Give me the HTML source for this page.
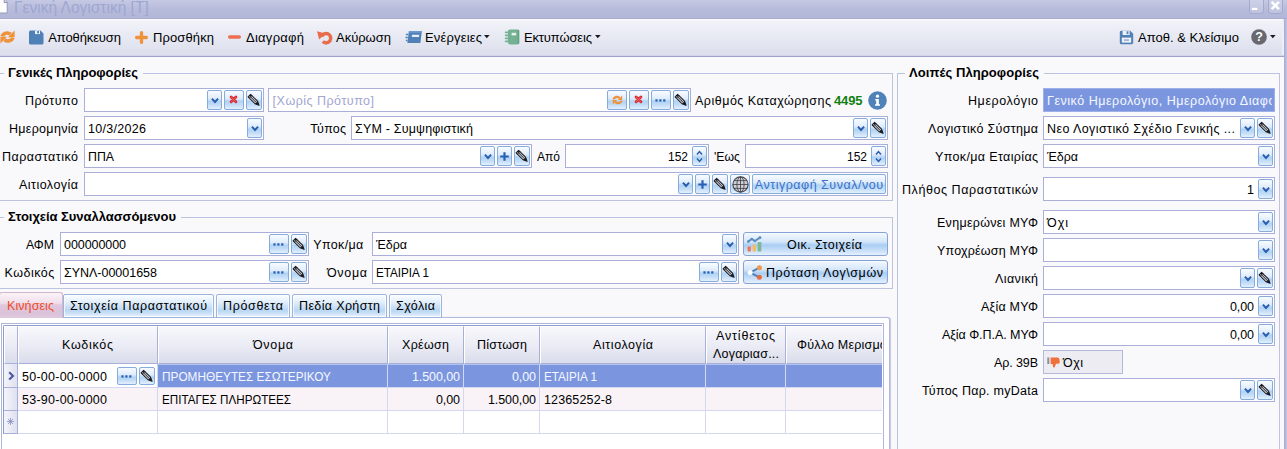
<!DOCTYPE html>
<html lang="el"><head><meta charset="utf-8"><title>Γενική Λογιστική</title>
<style>
html,body{margin:0;padding:0;}
body{width:1287px;height:449px;overflow:hidden;background:#f9f9fc;position:relative;font-family:"Liberation Sans", sans-serif;font-size:12.5px;color:#000;}
div,span.t,span.ic{position:absolute;}
span.ic{line-height:0;display:block;}
span.ic svg{display:block;overflow:visible;}
span.t{white-space:nowrap;line-height:16px;height:16px;}
.inp{border:1px solid #a9afd8;}
.sb{border:1px solid #86abdd;border-radius:2px;background:linear-gradient(#f9fcff,#deecfb 42%,#b0d3f4 58%,#c3def7 78%,#e4f0fc);}
.bb{border:1px solid #86a3d6;border-radius:3px;background:linear-gradient(#f4f9ff,#d4e6fa 40%,#a9cdf2 55%,#cfe3f9 85%,#e6f1fd);}
.tab{box-sizing:border-box;border:1px solid #9db4dc;border-radius:2px 2px 0 0;background:linear-gradient(#fbfdff,#e4f0fc 30%,#cfe3f8 50%,#b9d7f4 72%,#d6e8fa 90%,#f4f9fe);box-shadow:inset 0 0 0 1px rgba(255,255,255,0.7);}
.gh{box-sizing:border-box;border:1px solid #a9b0d8;border-left-color:#fff;border-top-color:#fff;background:linear-gradient(#f8f8fc,#ebecf5 50%,#d9dceb);}
</style></head><body>
<div style="left:0px;top:0px;width:1287px;height:19px;background:linear-gradient(#c6c9e3,#b8bcdb 45%,#b3b7d7 92%,#a4a9cd 100%);"></div>
<span class="ic" style="left:0px;top:0px"><svg width="8" height="14" viewBox="0 0 8 14"><path d="M-3 -2 H4.2 L7.2 2.4 V13 H-3 z" fill="#fdfdfd" stroke="#8e93b8" stroke-width="0.9"/><path d="M4.2 -1 V2.6 H7.2" fill="#d9dae6" stroke="#777b9a" stroke-width="0.8"/></svg></span>
<div style="left:1248.5px;top:-1px;width:15.5px;height:14.5px;background:linear-gradient(#cdd0e7,#bfc3df);border:1px solid #a3a9cf;border-radius:0 0 3px 3px;box-sizing:border-box;"></div>
<span class="ic" style="left:1250px;top:0px"><svg width="14" height="13" viewBox="0 0 14 13"><rect x="1.8" y="7.8" width="5.6" height="2.2" fill="#fff"/></svg></span>
<div style="left:1267.7px;top:-1px;width:15.5px;height:14.5px;background:linear-gradient(#cdd0e7,#bfc3df);border:1px solid #a3a9cf;border-radius:0 0 3px 3px;box-sizing:border-box;"></div>
<span class="ic" style="left:1269px;top:0px"><svg width="14" height="13" viewBox="0 0 14 13"><path d="M2.6 1.8 L10 9.2 M10 1.8 L2.6 9.2" stroke="#fff" stroke-width="2.5"/></svg></span>
<div style="left:0px;top:19px;width:1282px;height:36px;background:linear-gradient(#fbfbfe,#f1f2f8 6%,#e7e9f3 50%,#dcdfec);"></div>
<div style="left:1282px;top:19px;width:2px;height:36px;background:#eef0f8;"></div>
<div style="left:0px;top:55px;width:1284px;height:1px;background:#d2d5e9;"></div>
<div style="left:0px;top:56px;width:1284px;height:1px;background:#9ca3cc;"></div>
<div style="left:1284px;top:19px;width:3px;height:430px;background:linear-gradient(90deg,#a4aad4,#c4c7e3);"></div>
<span class="ic" style="left:0px;top:30px"><svg width="15" height="14" viewBox="0 0 15 14"><path d="M2.2 6.4 A5 4.2 0 0 1 10.6 4.2" fill="none" stroke="#f0923c" stroke-width="3.6"/><path d="M14.6 0.4 V7.2 H7.8 z" fill="#f0923c"/><path d="M12.8 7.6 A5 4.2 0 0 1 4.4 9.8" fill="none" stroke="#f0923c" stroke-width="3.6"/><path d="M0.4 13.6 V6.8 H7.2 z" fill="#f0923c"/></svg></span>
<span class="ic" style="left:29px;top:30px"><svg width="15" height="15" viewBox="0 0 15 15"><path d="M1.5 0.5 H11.5 L14.5 3.5 V13 a1.5 1.5 0 0 1 -1.5 1.5 H1.5 A1.5 1.5 0 0 1 0 13 V2 A1.5 1.5 0 0 1 1.5 0.5 z" fill="#4f80b6"/><rect x="6" y="0.5" width="5" height="3.6" fill="#f0f3fa"/><rect x="8.2" y="1" width="1.8" height="2.4" fill="#4f80b6"/></svg></span>
<span class="ic" style="left:135px;top:31px"><svg width="13" height="13" viewBox="0 0 13 13"><path d="M6.5 1.6 V11.4 M1.6 6.5 H11.4" stroke="#f0923c" stroke-width="3.3" stroke-linecap="round"/></svg></span>
<span class="ic" style="left:228px;top:34.8px"><svg width="13" height="4" viewBox="0 0 13 4"><rect x="0" y="0.2" width="13" height="3.5" rx="1.6" fill="#ee6f50"/></svg></span>
<span class="ic" style="left:317px;top:29.5px"><svg width="15" height="15" viewBox="0 0 15 15"><path d="M4.6 6.6 A4.7 4.7 0 1 1 5.8 11.6" fill="none" stroke="#e86d4a" stroke-width="3.5"/><path d="M0 1.2 L8.4 3.4 L2.2 9.6 z" fill="#e86d4a"/></svg></span>
<span class="ic" style="left:404.6px;top:30px"><svg width="17" height="14" viewBox="0 0 17 14"><path d="M3.9 1 H16.9 L15.4 13 H2.4 z" fill="#4f80b6"/><path d="M4 1 H16.9 L16.7 2.8 H3.8 z" fill="#6c98cb"/><path d="M7 4.8 H14.2 L14 7 H6.8 z" fill="#e4edf8"/><path d="M0.9 4.5 H3.2 M0.5 7.5 H2.8 M0.9 10.5 H2.5" stroke="#4f80b6" stroke-width="1.3"/></svg></span>
<span class="ic" style="left:484px;top:35px"><svg width="6" height="3" viewBox="0 0 6 3"><path d="M0 0 H5.6 L2.8 3.2 z" fill="#1a1a1a"/></svg></span>
<span class="ic" style="left:505px;top:29px"><svg width="15" height="16" viewBox="0 0 15 16"><rect x="3" y="0.6" width="11.2" height="14.8" rx="1.8" fill="#74b193"/><rect x="6.6" y="3.8" width="4.6" height="2.6" fill="#e6f3ec"/><path d="M0.6 3.4 H4.4 M0.6 6.4 H4.4 M0.6 9.4 H4.4 M0.6 12.4 H4.4" stroke="#74b193" stroke-width="1.6" stroke-linecap="round"/><rect x="12.6" y="0.8" width="1.6" height="14.4" rx="0.8" fill="#66a386"/></svg></span>
<span class="ic" style="left:595px;top:35px"><svg width="6" height="3" viewBox="0 0 6 3"><path d="M0 0 H5.6 L2.8 3.2 z" fill="#1a1a1a"/></svg></span>
<span class="ic" style="left:1119px;top:29.5px"><svg width="15" height="15" viewBox="0 0 15 15"><path d="M2 0.8 H11.2 L14.2 3.8 V12.8 a1.4 1.4 0 0 1 -1.4 1.4 H2 A1.4 1.4 0 0 1 0.8 12.8 V2.2 A1.4 1.4 0 0 1 2 0.8 z" fill="#4f80b6"/><rect x="3.6" y="0.8" width="7" height="4.2" fill="#eef1f9"/><rect x="7.6" y="1.3" width="1.8" height="2.8" fill="#4f80b6"/><rect x="2.8" y="7.6" width="9.4" height="5" fill="#eef1f9"/><rect x="5" y="9.2" width="5" height="1.8" fill="#9db7d6"/></svg></span>
<span class="ic" style="left:1250.8px;top:28.7px"><svg width="16" height="16" viewBox="0 0 16 16"><circle cx="8" cy="8" r="7.8" fill="#68686e"/><text x="8" y="12.4" font-family='"Liberation Sans", sans-serif' font-weight="bold" font-size="12.5" fill="#fff" text-anchor="middle">?</text></svg></span>
<span class="ic" style="left:1270px;top:35px"><svg width="6" height="3" viewBox="0 0 6 3"><path d="M0 0 H5.6 L2.8 3.2 z" fill="#1a1a1a"/></svg></span>
<div style="left:-2px;top:73px;width:895px;height:128px;border:1px solid #bdc2e0;box-sizing:border-box;"></div>
<div style="left:4px;top:71px;width:139px;height:5px;background:#f9f9fc;"></div>
<div style="left:-2px;top:217px;width:895px;height:72px;border:1px solid #bdc2e0;box-sizing:border-box;"></div>
<div style="left:4px;top:215px;width:177px;height:5px;background:#f9f9fc;"></div>
<div style="left:897px;top:73px;width:383px;height:400px;border:1px solid #bdc2e0;border-bottom:0;box-sizing:border-box;"></div>
<div style="left:905px;top:71px;width:139px;height:5px;background:#f9f9fc;"></div>
<div class="inp" style="left:84px;top:88px;width:178px;height:22px;background:#fff;"></div>
<div class="sb" style="left:246px;top:90px;width:14px;height:18px;"></div>
<span class="ic" style="left:247.0px;top:93.0px"><svg width="14" height="14" viewBox="0 0 14 14"><g transform="translate(7.3 7.5) rotate(-45)"><path d="M-1.8 -7 h3.6 v9.8 l-1.8 4 l-1.8 -4 z" fill="#c4c4cc" stroke="#1b1b20" stroke-width="1" stroke-linejoin="round"/><path d="M0 -6.2 v9" stroke="#1b1b20" stroke-width="0.8"/><path d="M-1.8 2.8 h3.6 l-1.8 4 z" fill="#1b1b20"/><path d="M-1.8 -5.2 h3.6" stroke="#1b1b20" stroke-width="0.9"/></g></svg></span>
<div class="sb" style="left:224px;top:90px;width:18px;height:18px;"></div>
<span class="ic" style="left:229.2px;top:94.9px"><svg width="9" height="9" viewBox="0 0 9 9"><path d="M2.1 2 L6.9 6.8 M6.9 2 L2.1 6.8" stroke="#dc2c33" stroke-width="2.9" stroke-linecap="round"/><path d="M2.4 2.3 L6.6 6.5 M6.6 2.3 L2.4 6.5" stroke="#f0666a" stroke-width="0.9" stroke-linecap="round"/></svg></span>
<div class="sb" style="left:207px;top:90px;width:13px;height:18px;"></div>
<span class="ic" style="left:210.5px;top:97.5px"><svg width="8" height="6" viewBox="0 0 8 6"><path d="M0.2 1.3 L1.6 0.1 L4 2.5 L6.4 0.1 L7.8 1.3 L4 5.6 z" fill="#2b5cae"/></svg></span>
<div class="inp" style="left:268px;top:88px;width:421px;height:22px;background:#fff;"></div>
<div class="sb" style="left:673px;top:90px;width:14px;height:18px;"></div>
<span class="ic" style="left:674.0px;top:93.0px"><svg width="14" height="14" viewBox="0 0 14 14"><g transform="translate(7.3 7.5) rotate(-45)"><path d="M-1.8 -7 h3.6 v9.8 l-1.8 4 l-1.8 -4 z" fill="#c4c4cc" stroke="#1b1b20" stroke-width="1" stroke-linejoin="round"/><path d="M0 -6.2 v9" stroke="#1b1b20" stroke-width="0.8"/><path d="M-1.8 2.8 h3.6 l-1.8 4 z" fill="#1b1b20"/><path d="M-1.8 -5.2 h3.6" stroke="#1b1b20" stroke-width="0.9"/></g></svg></span>
<div class="sb" style="left:651px;top:90px;width:18px;height:18px;"></div>
<span class="ic" style="left:655.2px;top:98.5px"><svg width="11" height="3" viewBox="0 0 11 3"><rect x="0.4" y="0.3" width="2.2" height="2.3" fill="#2a5fb6"/><rect x="4.3" y="0.3" width="2.2" height="2.3" fill="#2a5fb6"/><rect x="8.2" y="0.3" width="2.2" height="2.3" fill="#2a5fb6"/></svg></span>
<div class="sb" style="left:629px;top:90px;width:18px;height:18px;"></div>
<span class="ic" style="left:634.2px;top:94.9px"><svg width="9" height="9" viewBox="0 0 9 9"><path d="M2.1 2 L6.9 6.8 M6.9 2 L2.1 6.8" stroke="#dc2c33" stroke-width="2.9" stroke-linecap="round"/><path d="M2.4 2.3 L6.6 6.5 M6.6 2.3 L2.4 6.5" stroke="#f0666a" stroke-width="0.9" stroke-linecap="round"/></svg></span>
<div class="sb" style="left:607px;top:90px;width:18px;height:18px;"></div>
<span class="ic" style="left:611.5px;top:95.0px"><svg width="11" height="10" viewBox="0 0 11 10"><path d="M1.6 4.4 A3.4 3 0 0 1 7.6 3" fill="none" stroke="#f0923c" stroke-width="2.4"/><path d="M10.2 0.6 V5 H5.8 z" fill="#f0923c"/><path d="M9.4 5.6 A3.4 3 0 0 1 3.4 7" fill="none" stroke="#f0923c" stroke-width="2.4"/><path d="M0.8 9.4 V5 H5.2 z" fill="#f0923c"/></svg></span>
<span class="ic" style="left:867.9px;top:90.8px"><svg width="19" height="19" viewBox="0 0 20 20"><circle cx="10" cy="10" r="9.8" fill="#4f82b8"/><circle cx="10" cy="5.4" r="1.7" fill="#fff"/><path d="M7.6 8.4 H11.4 V14 H12.6 V15.6 H7.4 V14 H8.6 V10 H7.6 z" fill="#fff"/></svg></span>
<div class="inp" style="left:84px;top:116px;width:178px;height:22px;background:#fff;"></div>
<div class="sb" style="left:247px;top:118px;width:13px;height:18px;"></div>
<span class="ic" style="left:250.5px;top:125.5px"><svg width="8" height="6" viewBox="0 0 8 6"><path d="M0.2 1.3 L1.6 0.1 L4 2.5 L6.4 0.1 L7.8 1.3 L4 5.6 z" fill="#2b5cae"/></svg></span>
<div class="inp" style="left:351px;top:116px;width:535px;height:22px;background:#fff;"></div>
<div class="sb" style="left:870px;top:118px;width:14px;height:18px;"></div>
<span class="ic" style="left:871.0px;top:121.0px"><svg width="14" height="14" viewBox="0 0 14 14"><g transform="translate(7.3 7.5) rotate(-45)"><path d="M-1.8 -7 h3.6 v9.8 l-1.8 4 l-1.8 -4 z" fill="#c4c4cc" stroke="#1b1b20" stroke-width="1" stroke-linejoin="round"/><path d="M0 -6.2 v9" stroke="#1b1b20" stroke-width="0.8"/><path d="M-1.8 2.8 h3.6 l-1.8 4 z" fill="#1b1b20"/><path d="M-1.8 -5.2 h3.6" stroke="#1b1b20" stroke-width="0.9"/></g></svg></span>
<div class="sb" style="left:853px;top:118px;width:13px;height:18px;"></div>
<span class="ic" style="left:856.5px;top:125.5px"><svg width="8" height="6" viewBox="0 0 8 6"><path d="M0.2 1.3 L1.6 0.1 L4 2.5 L6.4 0.1 L7.8 1.3 L4 5.6 z" fill="#2b5cae"/></svg></span>
<div class="inp" style="left:84px;top:144px;width:446px;height:22px;background:#fff;"></div>
<div class="sb" style="left:514px;top:146px;width:14px;height:18px;"></div>
<span class="ic" style="left:515.0px;top:149.0px"><svg width="14" height="14" viewBox="0 0 14 14"><g transform="translate(7.3 7.5) rotate(-45)"><path d="M-1.8 -7 h3.6 v9.8 l-1.8 4 l-1.8 -4 z" fill="#c4c4cc" stroke="#1b1b20" stroke-width="1" stroke-linejoin="round"/><path d="M0 -6.2 v9" stroke="#1b1b20" stroke-width="0.8"/><path d="M-1.8 2.8 h3.6 l-1.8 4 z" fill="#1b1b20"/><path d="M-1.8 -5.2 h3.6" stroke="#1b1b20" stroke-width="0.9"/></g></svg></span>
<div class="sb" style="left:497px;top:146px;width:13px;height:18px;"></div>
<span class="ic" style="left:500.0px;top:151.7px"><svg width="9" height="9" viewBox="0 0 9 9"><path d="M4.5 0.2 V8.8 M0.2 4.5 H8.8" stroke="#2a5fb6" stroke-width="2.2"/></svg></span>
<div class="sb" style="left:480px;top:146px;width:13px;height:18px;"></div>
<span class="ic" style="left:483.5px;top:153.5px"><svg width="8" height="6" viewBox="0 0 8 6"><path d="M0.2 1.3 L1.6 0.1 L4 2.5 L6.4 0.1 L7.8 1.3 L4 5.6 z" fill="#2b5cae"/></svg></span>
<div class="inp" style="left:565px;top:144px;width:142px;height:22px;background:#fff;"></div>
<div class="sb" style="left:692px;top:146px;width:13px;height:18px;"></div>
<span class="ic" style="left:696.0px;top:149.5px"><svg width="7" height="13" viewBox="0 0 7 13"><path d="M1 4.4 L3.5 1.6 L6 4.4" fill="none" stroke="#2f5aa8" stroke-width="1.5"/><path d="M1 8.6 L3.5 11.4 L6 8.6" fill="none" stroke="#2f5aa8" stroke-width="1.5"/></svg></span>
<div class="inp" style="left:745px;top:144px;width:141px;height:22px;background:#fff;"></div>
<div class="sb" style="left:871px;top:146px;width:13px;height:18px;"></div>
<span class="ic" style="left:875.0px;top:149.5px"><svg width="7" height="13" viewBox="0 0 7 13"><path d="M1 4.4 L3.5 1.6 L6 4.4" fill="none" stroke="#2f5aa8" stroke-width="1.5"/><path d="M1 8.6 L3.5 11.4 L6 8.6" fill="none" stroke="#2f5aa8" stroke-width="1.5"/></svg></span>
<div class="inp" style="left:84px;top:172px;width:802px;height:22px;background:#fff;"></div>
<div class="sb" style="left:752px;top:174px;width:132px;height:18px;"></div>
<div class="sb" style="left:730px;top:174px;width:18px;height:18px;"></div>
<span class="ic" style="left:731.5px;top:175.5px"><svg width="17" height="17" viewBox="0 0 17 17"><circle cx="8.5" cy="8.5" r="7.6" fill="#cfcfd4" stroke="#4a4a50" stroke-width="1.1"/><ellipse cx="8.5" cy="8.5" rx="3.6" ry="7.6" fill="none" stroke="#3c3c42" stroke-width="0.8"/><path d="M8.5 0.9 V16.1 M0.9 8.5 H16.1 M2 4.6 H15 M2 12.4 H15" stroke="#3c3c42" stroke-width="0.8"/></svg></span>
<div class="sb" style="left:712px;top:174px;width:14px;height:18px;"></div>
<span class="ic" style="left:713.0px;top:177.0px"><svg width="14" height="14" viewBox="0 0 14 14"><g transform="translate(7.3 7.5) rotate(-45)"><path d="M-1.8 -7 h3.6 v9.8 l-1.8 4 l-1.8 -4 z" fill="#c4c4cc" stroke="#1b1b20" stroke-width="1" stroke-linejoin="round"/><path d="M0 -6.2 v9" stroke="#1b1b20" stroke-width="0.8"/><path d="M-1.8 2.8 h3.6 l-1.8 4 z" fill="#1b1b20"/><path d="M-1.8 -5.2 h3.6" stroke="#1b1b20" stroke-width="0.9"/></g></svg></span>
<div class="sb" style="left:695px;top:174px;width:13px;height:18px;"></div>
<span class="ic" style="left:698.0px;top:179.7px"><svg width="9" height="9" viewBox="0 0 9 9"><path d="M4.5 0.2 V8.8 M0.2 4.5 H8.8" stroke="#2a5fb6" stroke-width="2.2"/></svg></span>
<div class="sb" style="left:678px;top:174px;width:13px;height:18px;"></div>
<span class="ic" style="left:681.5px;top:181.5px"><svg width="8" height="6" viewBox="0 0 8 6"><path d="M0.2 1.3 L1.6 0.1 L4 2.5 L6.4 0.1 L7.8 1.3 L4 5.6 z" fill="#2b5cae"/></svg></span>
<div class="inp" style="left:60px;top:232px;width:247px;height:22px;background:#fff;"></div>
<div class="sb" style="left:291px;top:234px;width:14px;height:18px;"></div>
<span class="ic" style="left:292.0px;top:237.0px"><svg width="14" height="14" viewBox="0 0 14 14"><g transform="translate(7.3 7.5) rotate(-45)"><path d="M-1.8 -7 h3.6 v9.8 l-1.8 4 l-1.8 -4 z" fill="#c4c4cc" stroke="#1b1b20" stroke-width="1" stroke-linejoin="round"/><path d="M0 -6.2 v9" stroke="#1b1b20" stroke-width="0.8"/><path d="M-1.8 2.8 h3.6 l-1.8 4 z" fill="#1b1b20"/><path d="M-1.8 -5.2 h3.6" stroke="#1b1b20" stroke-width="0.9"/></g></svg></span>
<div class="sb" style="left:269px;top:234px;width:18px;height:18px;"></div>
<span class="ic" style="left:273.2px;top:242.5px"><svg width="11" height="3" viewBox="0 0 11 3"><rect x="0.4" y="0.3" width="2.2" height="2.3" fill="#2a5fb6"/><rect x="4.3" y="0.3" width="2.2" height="2.3" fill="#2a5fb6"/><rect x="8.2" y="0.3" width="2.2" height="2.3" fill="#2a5fb6"/></svg></span>
<div class="inp" style="left:60px;top:260px;width:247px;height:22px;background:#fff;"></div>
<div class="sb" style="left:291px;top:262px;width:14px;height:18px;"></div>
<span class="ic" style="left:292.0px;top:265.0px"><svg width="14" height="14" viewBox="0 0 14 14"><g transform="translate(7.3 7.5) rotate(-45)"><path d="M-1.8 -7 h3.6 v9.8 l-1.8 4 l-1.8 -4 z" fill="#c4c4cc" stroke="#1b1b20" stroke-width="1" stroke-linejoin="round"/><path d="M0 -6.2 v9" stroke="#1b1b20" stroke-width="0.8"/><path d="M-1.8 2.8 h3.6 l-1.8 4 z" fill="#1b1b20"/><path d="M-1.8 -5.2 h3.6" stroke="#1b1b20" stroke-width="0.9"/></g></svg></span>
<div class="sb" style="left:269px;top:262px;width:18px;height:18px;"></div>
<span class="ic" style="left:273.2px;top:270.5px"><svg width="11" height="3" viewBox="0 0 11 3"><rect x="0.4" y="0.3" width="2.2" height="2.3" fill="#2a5fb6"/><rect x="4.3" y="0.3" width="2.2" height="2.3" fill="#2a5fb6"/><rect x="8.2" y="0.3" width="2.2" height="2.3" fill="#2a5fb6"/></svg></span>
<div class="inp" style="left:372px;top:232px;width:365px;height:22px;background:#fff;"></div>
<div class="sb" style="left:722px;top:234px;width:13px;height:18px;"></div>
<span class="ic" style="left:725.5px;top:241.5px"><svg width="8" height="6" viewBox="0 0 8 6"><path d="M0.2 1.3 L1.6 0.1 L4 2.5 L6.4 0.1 L7.8 1.3 L4 5.6 z" fill="#2b5cae"/></svg></span>
<div class="inp" style="left:372px;top:260px;width:365px;height:22px;background:#fff;"></div>
<div class="sb" style="left:721px;top:262px;width:14px;height:18px;"></div>
<span class="ic" style="left:722.0px;top:265.0px"><svg width="14" height="14" viewBox="0 0 14 14"><g transform="translate(7.3 7.5) rotate(-45)"><path d="M-1.8 -7 h3.6 v9.8 l-1.8 4 l-1.8 -4 z" fill="#c4c4cc" stroke="#1b1b20" stroke-width="1" stroke-linejoin="round"/><path d="M0 -6.2 v9" stroke="#1b1b20" stroke-width="0.8"/><path d="M-1.8 2.8 h3.6 l-1.8 4 z" fill="#1b1b20"/><path d="M-1.8 -5.2 h3.6" stroke="#1b1b20" stroke-width="0.9"/></g></svg></span>
<div class="sb" style="left:699px;top:262px;width:18px;height:18px;"></div>
<span class="ic" style="left:703.2px;top:270.5px"><svg width="11" height="3" viewBox="0 0 11 3"><rect x="0.4" y="0.3" width="2.2" height="2.3" fill="#2a5fb6"/><rect x="4.3" y="0.3" width="2.2" height="2.3" fill="#2a5fb6"/><rect x="8.2" y="0.3" width="2.2" height="2.3" fill="#2a5fb6"/></svg></span>
<div class="bb" style="left:743px;top:232px;width:143px;height:22px;"></div>
<span class="ic" style="left:747.4px;top:236px"><svg width="16" height="17" viewBox="0 0 16 17"><rect x="0.6" y="10.5" width="3.3" height="5" rx="0.8" fill="#e8775c"/><rect x="5.6" y="8.5" width="3.4" height="7" rx="0.8" fill="#f2bc66"/><rect x="10.6" y="6" width="3.8" height="9.5" rx="0.8" fill="#7db89a"/><path d="M1.2 5.6 L4.8 3 L7.8 5 L13 1.6" fill="none" stroke="#5b8cc0" stroke-width="1.9" stroke-linejoin="round"/><circle cx="1.3" cy="5.6" r="1.3" fill="#5b8cc0"/><circle cx="4.8" cy="3" r="1.3" fill="#5b8cc0"/><circle cx="7.8" cy="5" r="1.3" fill="#5b8cc0"/><circle cx="13" cy="1.7" r="1.4" fill="#5b8cc0"/></svg></span>
<div class="bb" style="left:743px;top:260px;width:143px;height:22px;"></div>
<span class="ic" style="left:747.2px;top:264.6px"><svg width="16" height="15" viewBox="0 0 16 15"><path d="M3.2 7.6 L12.4 2.7 M3.2 7.6 L12.4 12.3" stroke="#4f80b6" stroke-width="2"/><circle cx="3.2" cy="7.6" r="2.5" fill="#fff"/><circle cx="12.4" cy="2.7" r="2.5" fill="#f09848"/><circle cx="12.4" cy="12.3" r="2.5" fill="#e86840"/></svg></span>
<div style="left:-2px;top:317px;width:892px;height:140px;background:#fff;border:1px solid #b4badc;border-radius:0 3px 0 0;box-sizing:border-box;box-shadow:1px 0 1px rgba(120,130,180,0.4);"></div>
<div style="left:-1px;top:292px;width:64px;height:26px;background:linear-gradient(#fbf3f7,#f0dfeb 40%,#e2c8dd 48%,#dac2d9 80%,#e0cadf);border:1px solid #d2b6cf;border-bottom:0;border-radius:3px 3px 0 0;box-sizing:border-box;"></div>
<div class="tab" style="left:63px;top:294px;width:151px;height:24px;"></div>
<div class="tab" style="left:216px;top:294px;width:74px;height:24px;"></div>
<div class="tab" style="left:292px;top:294px;width:95px;height:24px;"></div>
<div class="tab" style="left:389px;top:294px;width:53px;height:24px;"></div>
<div style="left:1px;top:323px;width:883px;height:130px;border:1px solid #b0b6da;box-sizing:border-box;background:#fff;"></div>
<div style="left:3px;top:325px;width:879px;height:109px;border-top:1px solid #8f9ccf;border-left:1px solid #8f9ccf;border-radius:2px 0 0 0;box-sizing:border-box;"></div>
<div class="gh" style="left:4px;top:326px;width:14px;height:38px;"></div>
<div class="gh" style="left:18px;top:326px;width:140px;height:38px;"></div>
<div class="gh" style="left:158px;top:326px;width:230px;height:38px;"></div>
<div class="gh" style="left:388px;top:326px;width:76px;height:38px;"></div>
<div class="gh" style="left:464px;top:326px;width:76px;height:38px;"></div>
<div class="gh" style="left:540px;top:326px;width:166px;height:38px;"></div>
<div class="gh" style="left:706px;top:326px;width:80px;height:38px;"></div>
<div class="gh" style="left:786px;top:326px;width:96px;height:38px;border-right:0;"></div>
<div style="left:18px;top:364px;width:864px;height:1px;background:#fff;"></div>
<div style="left:157px;top:364px;width:725px;height:1px;background:#b4c3ee;"></div>
<div style="left:18px;top:365px;width:864px;height:22px;background:#7b96df;"></div>
<div style="left:18px;top:365px;width:139px;height:22px;background:#fff;"></div>
<div style="left:18px;top:388px;width:864px;height:22px;background:#f9f3f7;"></div>
<div style="left:157px;top:365px;width:1px;height:68px;background:#d3d7f0;"></div>
<div style="left:387px;top:365px;width:1px;height:68px;background:#d3d7f0;"></div>
<div style="left:463px;top:365px;width:1px;height:68px;background:#d3d7f0;"></div>
<div style="left:539px;top:365px;width:1px;height:68px;background:#d3d7f0;"></div>
<div style="left:705px;top:365px;width:1px;height:68px;background:#d3d7f0;"></div>
<div style="left:785px;top:365px;width:1px;height:68px;background:#d3d7f0;"></div>
<div style="left:18px;top:387px;width:864px;height:1px;background:#d3d7f0;"></div>
<div style="left:18px;top:410px;width:864px;height:1px;background:#d3d7f0;"></div>
<div style="left:18px;top:433px;width:864px;height:1px;background:#d3d7f0;"></div>
<div style="left:4px;top:364px;width:13px;height:70px;background:linear-gradient(90deg,#f4f4fa,#dfe1ef);"></div>
<div style="left:4px;top:387px;width:14px;height:1px;background:#a9b0d8;"></div>
<div style="left:4px;top:410px;width:14px;height:1px;background:#a9b0d8;"></div>
<div style="left:4px;top:433px;width:14px;height:1px;background:#a9b0d8;"></div>
<div style="left:17px;top:364px;width:1px;height:70px;background:#a9b0d8;"></div>
<span class="ic" style="left:8px;top:371.3px"><svg width="7" height="10" viewBox="0 0 7 10"><path d="M1.2 1.2 L5 4.9 L1.2 8.6" fill="none" stroke="#4a58a6" stroke-width="2.1"/></svg></span>
<span class="ic" style="left:6.8px;top:418px"><svg width="7" height="7" viewBox="0 0 7 7"><path d="M3.5 0 V7 M0 3.5 H7 M1 1 L6 6 M6 1 L1 6" stroke="#8590c6" stroke-width="0.8"/></svg></span>
<div class="sb" style="left:117px;top:367px;width:18px;height:16px;"></div>
<span class="ic" style="left:121.2px;top:374.5px"><svg width="11" height="3" viewBox="0 0 11 3"><rect x="0.4" y="0.3" width="2.2" height="2.3" fill="#2a5fb6"/><rect x="4.3" y="0.3" width="2.2" height="2.3" fill="#2a5fb6"/><rect x="8.2" y="0.3" width="2.2" height="2.3" fill="#2a5fb6"/></svg></span>
<div class="sb" style="left:139px;top:367px;width:14px;height:16px;"></div>
<span class="ic" style="left:140.0px;top:369.0px"><svg width="14" height="14" viewBox="0 0 14 14"><g transform="translate(7.3 7.5) rotate(-45)"><path d="M-1.8 -7 h3.6 v9.8 l-1.8 4 l-1.8 -4 z" fill="#c4c4cc" stroke="#1b1b20" stroke-width="1" stroke-linejoin="round"/><path d="M0 -6.2 v9" stroke="#1b1b20" stroke-width="0.8"/><path d="M-1.8 2.8 h3.6 l-1.8 4 z" fill="#1b1b20"/><path d="M-1.8 -5.2 h3.6" stroke="#1b1b20" stroke-width="0.9"/></g></svg></span>
<div style="left:1043px;top:88px;width:232px;height:24px;background:#7b96df;border:1px solid #9db0e8;box-sizing:border-box;"></div>
<div class="inp" style="left:1043px;top:116px;width:230px;height:22px;background:#fff;"></div>
<div class="sb" style="left:1257px;top:118px;width:14px;height:18px;"></div>
<span class="ic" style="left:1258.0px;top:121.0px"><svg width="14" height="14" viewBox="0 0 14 14"><g transform="translate(7.3 7.5) rotate(-45)"><path d="M-1.8 -7 h3.6 v9.8 l-1.8 4 l-1.8 -4 z" fill="#c4c4cc" stroke="#1b1b20" stroke-width="1" stroke-linejoin="round"/><path d="M0 -6.2 v9" stroke="#1b1b20" stroke-width="0.8"/><path d="M-1.8 2.8 h3.6 l-1.8 4 z" fill="#1b1b20"/><path d="M-1.8 -5.2 h3.6" stroke="#1b1b20" stroke-width="0.9"/></g></svg></span>
<div class="sb" style="left:1240px;top:118px;width:13px;height:18px;"></div>
<span class="ic" style="left:1243.5px;top:125.5px"><svg width="8" height="6" viewBox="0 0 8 6"><path d="M0.2 1.3 L1.6 0.1 L4 2.5 L6.4 0.1 L7.8 1.3 L4 5.6 z" fill="#2b5cae"/></svg></span>
<div class="inp" style="left:1043px;top:144px;width:230px;height:22px;background:#fff;"></div>
<div class="sb" style="left:1258px;top:146px;width:13px;height:18px;"></div>
<span class="ic" style="left:1261.5px;top:153.5px"><svg width="8" height="6" viewBox="0 0 8 6"><path d="M0.2 1.3 L1.6 0.1 L4 2.5 L6.4 0.1 L7.8 1.3 L4 5.6 z" fill="#2b5cae"/></svg></span>
<div class="inp" style="left:1043px;top:177px;width:230px;height:22px;background:#fff;"></div>
<div class="sb" style="left:1258px;top:179px;width:13px;height:18px;"></div>
<span class="ic" style="left:1261.5px;top:186.5px"><svg width="8" height="6" viewBox="0 0 8 6"><path d="M0.2 1.3 L1.6 0.1 L4 2.5 L6.4 0.1 L7.8 1.3 L4 5.6 z" fill="#2b5cae"/></svg></span>
<div class="inp" style="left:1043px;top:210px;width:230px;height:22px;background:#fff;"></div>
<div class="sb" style="left:1258px;top:212px;width:13px;height:18px;"></div>
<span class="ic" style="left:1261.5px;top:219.5px"><svg width="8" height="6" viewBox="0 0 8 6"><path d="M0.2 1.3 L1.6 0.1 L4 2.5 L6.4 0.1 L7.8 1.3 L4 5.6 z" fill="#2b5cae"/></svg></span>
<div class="inp" style="left:1043px;top:238px;width:230px;height:22px;background:#fff;"></div>
<div class="sb" style="left:1258px;top:240px;width:13px;height:18px;"></div>
<span class="ic" style="left:1261.5px;top:247.5px"><svg width="8" height="6" viewBox="0 0 8 6"><path d="M0.2 1.3 L1.6 0.1 L4 2.5 L6.4 0.1 L7.8 1.3 L4 5.6 z" fill="#2b5cae"/></svg></span>
<div class="inp" style="left:1043px;top:266px;width:230px;height:22px;background:#fff;"></div>
<div class="sb" style="left:1257px;top:268px;width:14px;height:18px;"></div>
<span class="ic" style="left:1258.0px;top:271.0px"><svg width="14" height="14" viewBox="0 0 14 14"><g transform="translate(7.3 7.5) rotate(-45)"><path d="M-1.8 -7 h3.6 v9.8 l-1.8 4 l-1.8 -4 z" fill="#c4c4cc" stroke="#1b1b20" stroke-width="1" stroke-linejoin="round"/><path d="M0 -6.2 v9" stroke="#1b1b20" stroke-width="0.8"/><path d="M-1.8 2.8 h3.6 l-1.8 4 z" fill="#1b1b20"/><path d="M-1.8 -5.2 h3.6" stroke="#1b1b20" stroke-width="0.9"/></g></svg></span>
<div class="sb" style="left:1240px;top:268px;width:13px;height:18px;"></div>
<span class="ic" style="left:1243.5px;top:275.5px"><svg width="8" height="6" viewBox="0 0 8 6"><path d="M0.2 1.3 L1.6 0.1 L4 2.5 L6.4 0.1 L7.8 1.3 L4 5.6 z" fill="#2b5cae"/></svg></span>
<div class="inp" style="left:1043px;top:294px;width:230px;height:22px;background:#fff;"></div>
<div class="sb" style="left:1258px;top:296px;width:13px;height:18px;"></div>
<span class="ic" style="left:1261.5px;top:303.5px"><svg width="8" height="6" viewBox="0 0 8 6"><path d="M0.2 1.3 L1.6 0.1 L4 2.5 L6.4 0.1 L7.8 1.3 L4 5.6 z" fill="#2b5cae"/></svg></span>
<div class="inp" style="left:1043px;top:322px;width:230px;height:22px;background:#fff;"></div>
<div class="sb" style="left:1258px;top:324px;width:13px;height:18px;"></div>
<span class="ic" style="left:1261.5px;top:331.5px"><svg width="8" height="6" viewBox="0 0 8 6"><path d="M0.2 1.3 L1.6 0.1 L4 2.5 L6.4 0.1 L7.8 1.3 L4 5.6 z" fill="#2b5cae"/></svg></span>
<div style="left:1043px;top:350px;width:80px;height:24px;background:#ececf2;border:1px solid #b3b9dc;box-sizing:border-box;"></div>
<span class="ic" style="left:1047px;top:356.5px"><svg width="13" height="11" viewBox="0 0 13 11"><rect x="0.3" y="0.5" width="2" height="6.5" fill="#8a8f98"/><path d="M3.6 0.5 H10.6 q1.6 0 1.8 1.6 L12.8 5 q0 1.8 -1.6 1.8 H9 L7.6 10.6 q-1.8 0 -1.8 -1.6 V7 H3.6 z" fill="#f0703c"/></svg></span>
<div class="inp" style="left:1043px;top:378px;width:230px;height:22px;background:#fff;"></div>
<div class="sb" style="left:1257px;top:380px;width:14px;height:18px;"></div>
<span class="ic" style="left:1258.0px;top:383.0px"><svg width="14" height="14" viewBox="0 0 14 14"><g transform="translate(7.3 7.5) rotate(-45)"><path d="M-1.8 -7 h3.6 v9.8 l-1.8 4 l-1.8 -4 z" fill="#c4c4cc" stroke="#1b1b20" stroke-width="1" stroke-linejoin="round"/><path d="M0 -6.2 v9" stroke="#1b1b20" stroke-width="0.8"/><path d="M-1.8 2.8 h3.6 l-1.8 4 z" fill="#1b1b20"/><path d="M-1.8 -5.2 h3.6" stroke="#1b1b20" stroke-width="0.9"/></g></svg></span>
<div class="sb" style="left:1240px;top:380px;width:13px;height:18px;"></div>
<span class="ic" style="left:1243.5px;top:387.5px"><svg width="8" height="6" viewBox="0 0 8 6"><path d="M0.2 1.3 L1.6 0.1 L4 2.5 L6.4 0.1 L7.8 1.3 L4 5.6 z" fill="#2b5cae"/></svg></span>
<span class="t" id="t0" style="left:14.3px;top:-0.02px;font-size:17px;color:#9da7d2;transform:scaleX(0.913);transform-origin:0 0;">Γενική Λογιστική [T]</span>
<span class="t" id="t1" style="left:48.3px;top:29.90px;font-size:13px;letter-spacing:-0.124px;">Αποθήκευση</span>
<span class="t" id="t2" style="left:153px;top:29.90px;font-size:13px;letter-spacing:0.109px;">Προσθήκη</span>
<span class="t" id="t3" style="left:246px;top:29.90px;font-size:13px;letter-spacing:0.261px;">Διαγραφή</span>
<span class="t" id="t4" style="left:336px;top:29.90px;font-size:13px;letter-spacing:-0.016px;">Ακύρωση</span>
<span class="t" id="t5" style="left:425px;top:29.90px;font-size:13px;letter-spacing:0.174px;">Ενέργειες</span>
<span class="t" id="t6" style="left:524px;top:29.90px;font-size:13px;letter-spacing:-0.148px;">Εκτυπώσεις</span>
<span class="t" id="t7" style="left:1138px;top:29.90px;font-size:13px;letter-spacing:0.005px;">Αποθ. &amp; Κλείσιμο</span>
<span class="t" id="t8" style="left:8px;top:65.10px;font-size:13px;font-weight:bold;letter-spacing:-0.038px;">Γενικές Πληροφορίες</span>
<span class="t" id="t9" style="left:8px;top:209.10px;font-size:13px;font-weight:bold;letter-spacing:-0.040px;">Στοιχεία Συναλλασσόμενου</span>
<span class="t" id="t10" style="left:909px;top:65.10px;font-size:13px;font-weight:bold;letter-spacing:0.072px;">Λοιπές Πληροφορίες</span>
<span class="t" id="t11" style="left:25px;top:92.87px;letter-spacing:0.484px;">Πρότυπο</span>
<span class="t" id="t12" style="left:272.6px;top:92.87px;color:#a2a6cf;letter-spacing:0.492px;">[Χωρίς Πρότυπο]</span>
<span class="t" id="t13" style="left:695px;top:92.87px;letter-spacing:0.502px;">Αριθμός Καταχώρησης</span>
<span class="t" id="t14" style="left:834px;top:92.70px;font-size:13px;color:#128012;font-weight:bold;letter-spacing:-0.141px;">4495</span>
<span class="t" id="t15" style="left:9px;top:120.87px;letter-spacing:0.302px;">Ημερομηνία</span>
<span class="t" id="t16" style="left:88px;top:120.87px;letter-spacing:0.299px;">10/3/2026</span>
<span class="t" id="t17" style="left:310.3px;top:120.87px;letter-spacing:0.222px;">Τύπος</span>
<span class="t" id="t18" style="left:355px;top:120.87px;letter-spacing:0.192px;">ΣΥΜ - Συμψηφιστική</span>
<span class="t" id="t19" style="left:2px;top:148.87px;letter-spacing:0.494px;">Παραστατικό</span>
<span class="t" id="t20" style="left:88px;top:148.87px;transform:scaleX(0.9846);transform-origin:0 0;">ΠΠΑ</span>
<span class="t" id="t21" style="left:537px;top:148.87px;transform:scaleX(0.9615);transform-origin:0 0;">Από</span>
<span class="t" id="t22" style="left:668px;top:148.87px;transform:scaleX(0.9588);transform-origin:0 0;">152</span>
<span class="t" id="t23" style="left:714px;top:148.87px;transform:scaleX(0.9806);transform-origin:0 0;">'Εως</span>
<span class="t" id="t24" style="left:847px;top:148.87px;transform:scaleX(0.9588);transform-origin:0 0;">152</span>
<span class="t" id="t25" style="left:19px;top:176.87px;letter-spacing:0.465px;">Αιτιολογία</span>
<span class="t" id="t26" style="left:754.8px;top:176.87px;color:#3a72cc;letter-spacing:0.511px;">Αντιγραφή Συναλ/νου</span>
<span class="t" id="t27" style="left:26px;top:236.87px;transform:scaleX(0.9868);transform-origin:0 0;">ΑΦΜ</span>
<span class="t" id="t28" style="left:64px;top:236.87px;letter-spacing:-0.072px;">000000000</span>
<span class="t" id="t29" style="left:4.5px;top:264.87px;letter-spacing:0.506px;">Κωδικός</span>
<span class="t" id="t30" style="left:64px;top:264.87px;letter-spacing:-0.020px;">ΣΥΝΛ-00001658</span>
<span class="t" id="t31" style="left:313.3px;top:236.87px;letter-spacing:0.352px;">Υποκ/μα</span>
<span class="t" id="t32" style="left:376px;top:236.87px;letter-spacing:-0.036px;">Έδρα</span>
<span class="t" id="t33" style="left:327px;top:264.87px;letter-spacing:0.672px;">Όνομα</span>
<span class="t" id="t34" style="left:376px;top:264.87px;transform:scaleX(0.9339);transform-origin:0 0;">ΕΤΑΙΡΙΑ 1</span>
<span class="t" id="t35" style="left:787px;top:236.87px;letter-spacing:0.462px;">Οικ. Στοιχεία</span>
<span class="t" id="t36" style="left:766px;top:264.87px;letter-spacing:0.579px;">Πρόταση Λογ\σμών</span>
<span class="t" id="t37" style="left:7px;top:298.27px;color:#f04c28;letter-spacing:0.085px;">Κινήσεις</span>
<span class="t" id="t38" style="left:70px;top:298.47px;letter-spacing:0.594px;">Στοιχεία Παραστατικού</span>
<span class="t" id="t39" style="left:223px;top:298.47px;letter-spacing:0.667px;">Πρόσθετα</span>
<span class="t" id="t40" style="left:299px;top:298.47px;letter-spacing:0.359px;">Πεδία Χρήστη</span>
<span class="t" id="t41" style="left:396px;top:298.47px;letter-spacing:0.416px;">Σχόλια</span>
<span class="t" id="t42" style="left:62px;top:337.37px;letter-spacing:0.706px;">Κωδικός</span>
<span class="t" id="t43" style="left:253px;top:337.37px;letter-spacing:0.672px;">Όνομα</span>
<span class="t" id="t44" style="left:402px;top:337.37px;letter-spacing:0.309px;">Χρέωση</span>
<span class="t" id="t45" style="left:477px;top:337.37px;letter-spacing:0.214px;">Πίστωση</span>
<span class="t" id="t46" style="left:593px;top:337.37px;letter-spacing:0.576px;">Αιτιολογία</span>
<span class="t" id="t47" style="left:716px;top:328.37px;letter-spacing:0.832px;">Αντίθετος</span>
<span class="t" id="t48" style="left:713px;top:345.87px;letter-spacing:0.197px;">Λογαριασ...</span>
<span class="t" id="t49" style="left:797px;top:337.37px;letter-spacing:0.21px;width:85px;overflow:hidden;">Φύλλο Μερισμο</span>
<span class="t" id="t50" style="left:22px;top:369.17px;letter-spacing:0.249px;">50-00-00-0000</span>
<span class="t" id="t51" style="left:162px;top:369.17px;color:#f6f8ff;transform:scaleX(0.9446);transform-origin:0 0;">ΠΡΟΜΗΘΕΥΤΕΣ ΕΣΩΤΕΡΙΚΟΥ</span>
<span class="t" id="t52" style="left:412px;top:369.17px;color:#f6f8ff;letter-spacing:-0.096px;">1.500,00</span>
<span class="t" id="t53" style="left:512px;top:369.17px;color:#f6f8ff;letter-spacing:-0.115px;">0,00</span>
<span class="t" id="t54" style="left:544px;top:369.17px;color:#f6f8ff;transform:scaleX(0.9339);transform-origin:0 0;">ΕΤΑΙΡΙΑ 1</span>
<span class="t" id="t55" style="left:22px;top:392.17px;letter-spacing:0.249px;">53-90-00-0000</span>
<span class="t" id="t56" style="left:162px;top:392.17px;transform:scaleX(0.9318);transform-origin:0 0;">ΕΠΙΤΑΓΕΣ ΠΛΗΡΩΤΕΕΣ</span>
<span class="t" id="t57" style="left:436px;top:392.17px;letter-spacing:-0.115px;">0,00</span>
<span class="t" id="t58" style="left:488px;top:392.17px;letter-spacing:-0.096px;">1.500,00</span>
<span class="t" id="t59" style="left:544px;top:392.17px;letter-spacing:0.141px;">12365252-8</span>
<span class="t" id="t60" style="left:968px;top:92.87px;letter-spacing:0.597px;">Ημερολόγιο</span>
<span class="t" id="t61" style="left:928px;top:120.87px;letter-spacing:0.319px;">Λογιστικό Σύστημα</span>
<span class="t" id="t62" style="left:935px;top:148.87px;letter-spacing:0.359px;">Υποκ/μα Εταιρίας</span>
<span class="t" id="t63" style="left:902px;top:181.87px;letter-spacing:0.569px;">Πλήθος Παραστατικών</span>
<span class="t" id="t64" style="left:937px;top:214.87px;letter-spacing:0.286px;">Ενημερώνει ΜΥΦ</span>
<span class="t" id="t65" style="left:937px;top:242.87px;letter-spacing:0.202px;">Υποχρέωση ΜΥΦ</span>
<span class="t" id="t66" style="left:995px;top:270.87px;letter-spacing:0.401px;">Λιανική</span>
<span class="t" id="t67" style="left:981px;top:298.87px;letter-spacing:0.223px;">Αξία ΜΥΦ</span>
<span class="t" id="t68" style="left:942px;top:326.87px;letter-spacing:-0.048px;">Αξία Φ.Π.Α. ΜΥΦ</span>
<span class="t" id="t69" style="left:994px;top:354.87px;letter-spacing:-0.107px;">Αρ. 39Β</span>
<span class="t" id="t70" style="left:922px;top:382.87px;letter-spacing:0.271px;">Τύπος Παρ. myData</span>
<span class="t" id="t71" style="left:1047px;top:92.87px;color:#f6f8ff;letter-spacing:0.53px;width:224.5px;overflow:hidden;">Γενικό Ημερολόγιο, Ημερολόγιο Διαφο</span>
<span class="t" id="t72" style="left:1047px;top:120.87px;letter-spacing:0.411px;">Νεο Λογιστικό Σχέδιο Γενικής ...</span>
<span class="t" id="t73" style="left:1047px;top:148.87px;letter-spacing:-0.036px;">Έδρα</span>
<span class="t" id="t74" style="left:1247px;top:181.87px;">1</span>
<span class="t" id="t75" style="left:1047px;top:214.87px;letter-spacing:0.984px;">Όχι</span>
<span class="t" id="t76" style="left:1230px;top:298.87px;letter-spacing:-0.115px;">0,00</span>
<span class="t" id="t77" style="left:1230px;top:326.87px;letter-spacing:-0.115px;">0,00</span>
<span class="t" id="t78" style="left:1063px;top:354.87px;letter-spacing:0.484px;">Όχι</span>
</body></html>
